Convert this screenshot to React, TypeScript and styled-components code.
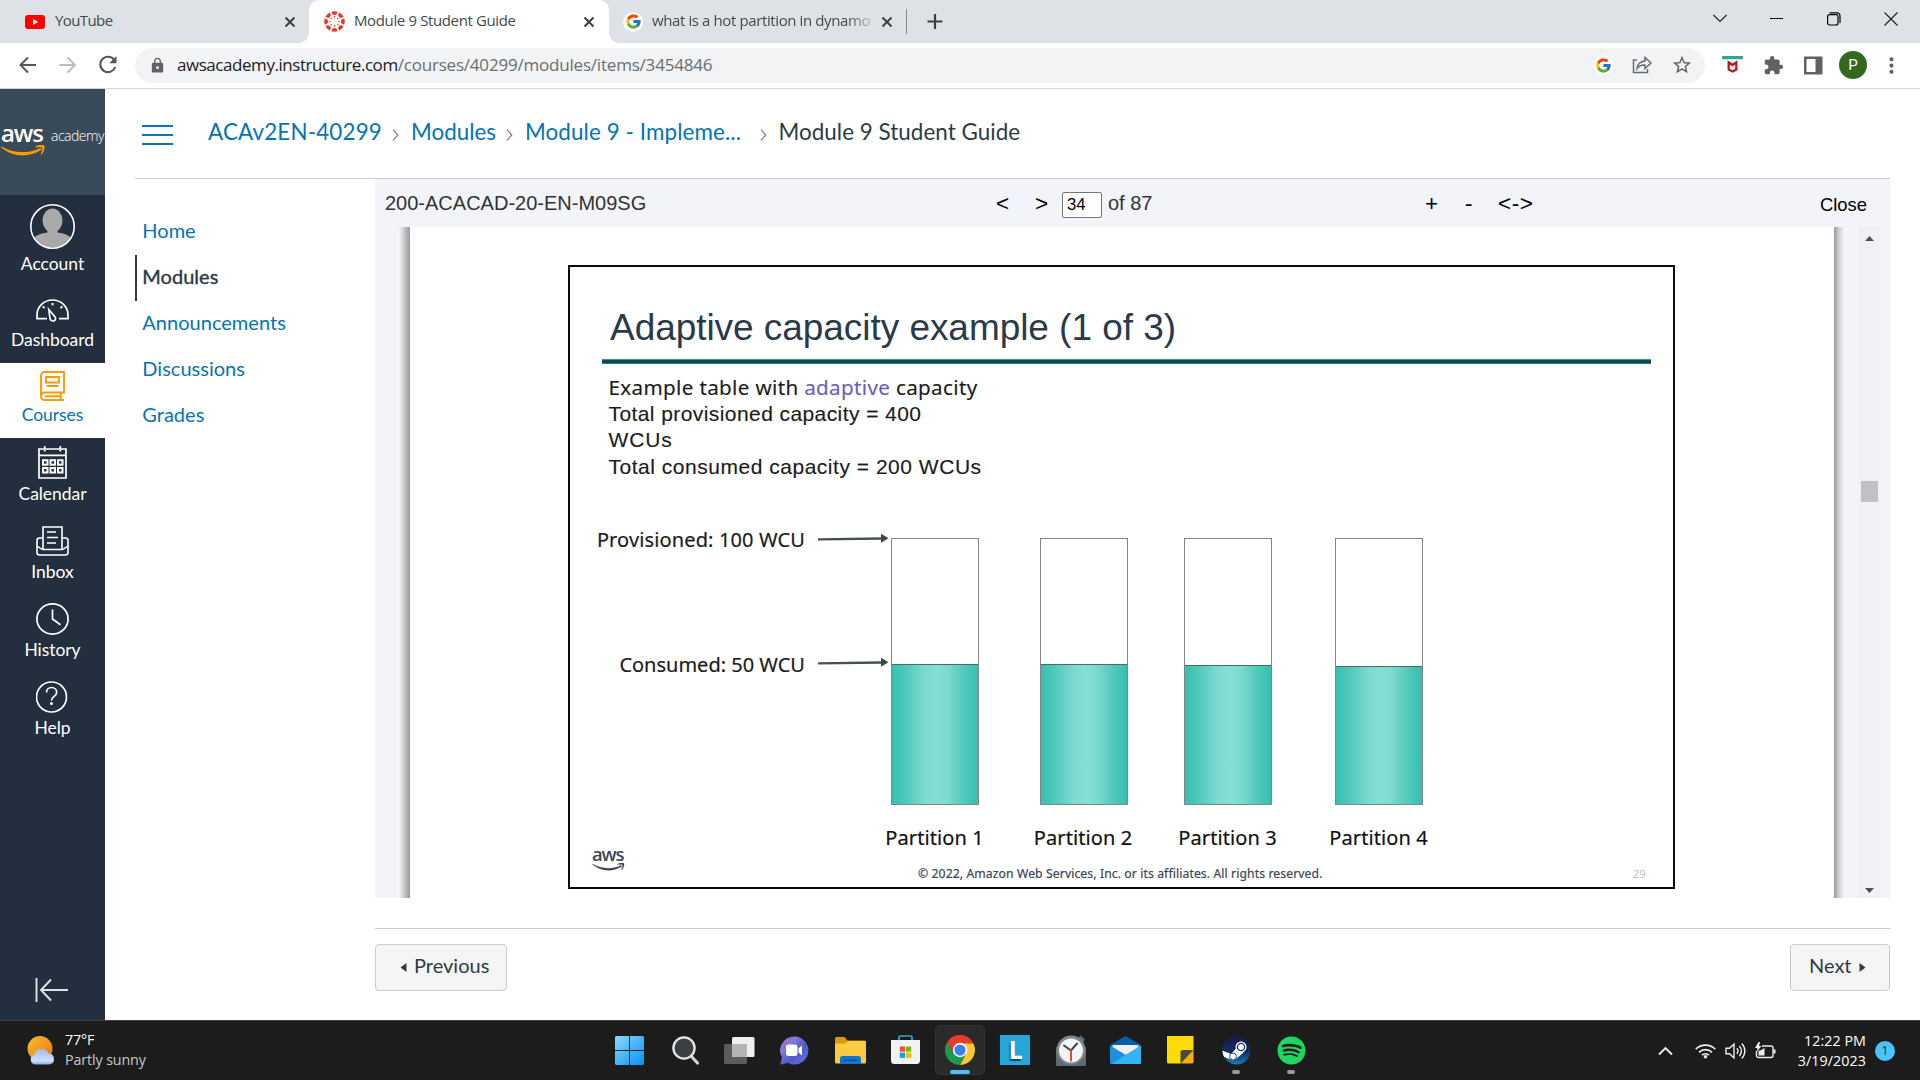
import React from "react";
import styled, { createGlobalStyle, css } from "styled-components";
import { FcGoogle } from "react-icons/fc";
import { MdLock, MdStarBorder, MdExtension, MdMoreVert } from "react-icons/md";
import { FaSpotify } from "react-icons/fa";

const ui = `"Open Sans", "Noto Sans", sans-serif`;
const lato = `Lato, "Noto Sans", sans-serif`;
const arial = `"Liberation Sans", Arial, sans-serif`;
const ember = `"Noto Sans", "Open Sans", sans-serif`;

const Global = createGlobalStyle`
  * { box-sizing: border-box; }
  html, body { margin: 0; padding: 0; background: #fff; overflow: hidden; }
  svg { display: block; flex: none; }
`;

const Screen = styled.div`
  width: 1920px;
  height: 1080px;
  display: flex;
  flex-direction: column;
  overflow: hidden;
  background: #fff;
`;

/* ---------- browser chrome ---------- */

const TabStrip = styled.div`
  height: 43px;
  flex: none;
  display: flex;
  background: #dee1e6;
`;

const Tab = styled.div<{ $w: number; $active?: boolean; $pl: number; $pr?: number }>`
  position: relative;
  width: ${(p) => p.$w}px;
  height: 43px;
  padding-left: ${(p) => p.$pl}px;
  padding-right: ${(p) => p.$pr ?? 13}px;
  display: flex;
  align-items: center;
  ${(p) =>
    p.$active &&
    css`
      background: #fff;
      border-radius: 10px 10px 0 0;
      &::before,
      &::after {
        content: "";
        position: absolute;
        bottom: 0;
        width: 10px;
        height: 10px;
      }
      &::before {
        left: -10px;
        background: radial-gradient(circle at 0 0, transparent 9.5px, #fff 10px);
      }
      &::after {
        right: -10px;
        background: radial-gradient(circle at 100% 0, transparent 9.5px, #fff 10px);
      }
    `}
`;

const TabTitle = styled.span<{ $ls: number; $ml: number; $fade?: boolean }>`
  flex: 1;
  margin-left: ${(p) => p.$ml}px;
  font: 15px/20px ${ui};
  letter-spacing: ${(p) => p.$ls}px;
  color: #45494d;
  white-space: nowrap;
  padding-bottom: 4px;
  ${(p) =>
    p.$fade &&
    css`
      flex: none;
      width: 221px;
      margin-right: 8px;
      mask-image: linear-gradient(90deg, #000 88%, rgba(0, 0, 0, 0.15));
    `}
`;

const TabDivider = styled.span`
  width: 1px;
  height: 25px;
  margin-top: 9px;
  background: #85888c;
`;

const NewTab = styled.span`
  margin: 14px 0 0 20px;
`;

const WindowControls = styled.div`
  margin-left: auto;
  display: flex;
  align-items: center;
  gap: 37px;
  padding: 0 19px 6px 0;
`;

const Toolbar = styled.div`
  height: 46px;
  flex: none;
  display: flex;
  align-items: center;
  border-bottom: 1px solid #d5d7da;
  padding: 0 0 1px 16px;
`;

const NavButtons = styled.div`
  display: flex;
  flex: none;
  width: 119px;
  gap: 16px;
`;

const Omnibox = styled.div`
  width: 1570px;
  flex: none;
  height: 35px;
  border-radius: 18px;
  background: #f1f3f4;
  display: flex;
  align-items: center;
  padding: 0 12px 0 14px;
`;

const Url = styled.div`
  margin-left: 11px;
  flex: 1;
  font: 17px/24px ${ui};
  color: #202124;
  letter-spacing: -0.45px;
  white-space: nowrap;
`;

const UrlPath = styled.span`
  color: #6a6e73;
  letter-spacing: -0.2px;
`;

const OmniIcons = styled.div`
  display: flex;
  align-items: center;
  gap: 18px;
`;

const Extensions = styled.div`
  display: flex;
  flex: none;
  align-items: center;
  margin-left: 17px;
  gap: 20px;
`;

const Avatar = styled.div`
  width: 28px;
  height: 28px;
  margin: 0 -8px 0 -4px;
  border-radius: 50%;
  background: #33691e;
  color: #fff;
  font: 15px/28px Roboto, ${ui};
  text-align: center;
`;

const GoogleDot = styled.span<{ $s: number }>`
  width: ${(p) => p.$s}px;
  height: ${(p) => p.$s}px;
  border-radius: 50%;
  background: #fff;
  display: flex;
  align-items: center;
  justify-content: center;
`;

/* ---------- canvas page ---------- */

const Page = styled.div`
  flex: 1;
  min-height: 0;
  display: flex;
`;

const Sidebar = styled.nav`
  width: 105px;
  flex: none;
  background: #232f3e;
  display: flex;
  flex-direction: column;
`;

const Brand = styled.div`
  height: 106px;
  background: #394b58;
  display: flex;
  padding: 33px 0 0 1px;
  color: #fff;
`;

const BrandMark = styled.div`
  width: 44px;
  display: flex;
  flex-direction: column;
  gap: 1px;
`;

const AwsWord = styled.div<{ $size: number; $ls: number; $lh: number }>`
  font: 600 ${(p) => p.$size}px/${(p) => p.$lh}px ${ui};
  letter-spacing: ${(p) => p.$ls}px;
`;

const AcademyWord = styled.div`
  font: 300 14px/20px ${ui};
  letter-spacing: -0.5px;
  margin: 4px 0 0 6px;
`;

const SideItem = styled.div<{ $h: number; $gap: number; $active?: boolean }>`
  height: ${(p) => p.$h}px;
  flex: none;
  display: flex;
  flex-direction: column;
  align-items: center;
  justify-content: flex-end;
  gap: ${(p) => p.$gap}px;
  padding-bottom: 12px;
  background: ${(p) => (p.$active ? "#fff" : "transparent")};
  color: ${(p) => (p.$active ? "#0374b5" : "#fff")};
  font: 17.5px/22px ${lato};
  letter-spacing: -0.05px;
`;

const Collapse = styled.div`
  margin: auto 0 17px 35px;
`;

const Main = styled.main`
  width: 1755px;
  margin-left: 30px;
  display: flex;
  flex-direction: column;
`;

const Header = styled.header`
  height: 90px;
  flex: none;
  display: flex;
  align-items: center;
  border-bottom: 1px solid #c7cdd1;
  padding: 0 0 3px 7px;
`;

const Hamburger = styled.div`
  width: 31px;
  height: 20px;
  margin: 5px 35px 0 0;
  display: flex;
  flex-direction: column;
  justify-content: space-between;
  span {
    height: 2px;
    background: #0b74b8;
  }
`;

const Crumb = styled.span<{ $current?: boolean; $w: number; $ls?: number }>`
  width: ${(p) => p.$w}px;
  font: 22.4px/28px ${lato};
  letter-spacing: ${(p) => p.$ls ?? 0}px;
  color: ${(p) => (p.$current ? "#2d3b45" : "#0374b5")};
  white-space: nowrap;
`;

const CrumbArrow = styled.span<{ $l: number }>`
  margin: 6px 12px 0 ${(p) => p.$l}px;
`;

const Body = styled.div`
  flex: 1;
  min-height: 0;
  display: flex;
`;

const CourseNav = styled.div`
  width: 240px;
  flex: none;
  padding-top: 30px;
`;

const CourseLink = styled.div<{ $active?: boolean }>`
  height: 46px;
  padding: 0 0 3px 5.3px;
  border-left: 2px solid ${(p) => (p.$active ? "#2d3b45" : "transparent")};
  color: ${(p) => (p.$active ? "#2d3b45" : "#0374b5")};
  -webkit-text-stroke: ${(p) => (p.$active ? "0.4px #2d3b45" : "0")};
  font: 20px/43px ${lato};
  letter-spacing: 0.02px;
`;

const Content = styled.div`
  width: 1515px;
  display: flex;
  flex-direction: column;
`;

const Viewer = styled.section`
  height: 719px;
  flex: none;
  background: #f2f4f9;
  display: flex;
  flex-direction: column;
`;

const ViewerBar = styled.div`
  height: 48px;
  flex: none;
  display: flex;
  align-items: center;
  padding: 0 23px 0 10px;
  font: 20px/24px ${arial};
  color: #333;
`;

const DocName = styled.span`
  width: 611px;
  padding-bottom: 1px;
`;

const BarButton = styled.span<{ $w: number }>`
  width: ${(p) => p.$w}px;
  padding-top: 2px;
  font-size: 22.5px;
  letter-spacing: 0.6px;
  color: #000;
`;

const PageInput = styled.span`
  width: 40px;
  height: 26px;
  margin-top: 3px;
  border: 1px solid #767676;
  border-radius: 2px;
  background: #fff;
  color: #000;
  font: 16.7px/24px ${arial};
  padding-left: 4px;
`;

const PageCount = styled.span`
  width: 323px;
  padding: 0 0 1px 6px;
`;

const CloseButton = styled.span`
  margin-left: auto;
  padding-top: 3px;
  font-size: 18.4px;
  color: #000;
`;

const ViewerBody = styled.div`
  flex: 1;
  display: flex;
  padding-left: 24px;
  overflow: hidden;
`;

const EdgeShadow = styled.div<{ $right?: boolean }>`
  width: ${(p) => (p.$right ? 10 : 11)}px;
  background: ${(p) =>
    p.$right
      ? "linear-gradient(90deg, #98999d, #cfd0d5 50%, #f2f4f9)"
      : "linear-gradient(270deg, #98999b, #c4c5c9 50%, #f2f4f9)"};
`;

const Paper = styled.div`
  width: 1424px;
  background: #fff;
  padding: 38px 0 0 158px;
`;

const Slide = styled.div`
  width: 1107px;
  height: 624px;
  border: solid #0a0a0a;
  border-width: 2px;
  display: flex;
  flex-direction: column;
`;

const SlideTitle = styled.div`
  margin: 39px 0 0 40px;
  font: 37px/44px ${arial};
  letter-spacing: -0.05px;
  color: #2b3a4a;
`;

const SlideRule = styled.div`
  width: 1049px;
  height: 5px;
  margin: 9px 0 0 32px;
  background: #0b4d56;
  border: solid #5b868c;
  border-width: 1px 0;
  border-bottom-color: #34707a;
`;

const SlideText = styled.div`
  height: 106px;
  margin: 10px 0 0 38.5px;
  color: #1c1c1c;
`;

const Line = styled.div<{ $ember?: boolean; $ls: number }>`
  height: 26.5px;
  white-space: nowrap;
  font: ${(p) => (p.$ember ? `20.6px/26px ${ember}` : `21px/26.5px ${arial}`)};
  letter-spacing: ${(p) => p.$ls}px;
  -webkit-text-stroke: 0.15px currentColor;
`;

const Accent = styled.span`
  color: #6a5fc0;
`;

const Chart = styled.div`
  margin-top: 46px;
  display: flex;
  height: 326px;
  flex: none;
`;

const Markers = styled.div`
  width: 321px;
  display: flex;
  flex-direction: column;
  gap: 96.5px;
`;

const Marker = styled.div<{ $ls: number }>`
  height: 28px;
  display: flex;
  justify-content: flex-end;
  align-items: center;
  gap: 13px;
  padding-right: 2px;
  font: 20px/28px ${ember};
  letter-spacing: ${(p) => p.$ls}px;
  color: #1c1c1c;
  -webkit-text-stroke: 0.2px currentColor;
  svg {
    margin-bottom: 4px;
  }
`;

const Partition = styled.div<{ $ml: number }>`
  width: 88px;
  margin: 12px 0 0 ${(p) => p.$ml}px;
  display: flex;
  flex-direction: column;
  align-items: center;
`;

const Bar = styled.div`
  width: 88px;
  height: 267px;
  flex: none;
  border: 1px solid #7e8686;
  display: flex;
  flex-direction: column;
  justify-content: flex-end;
`;

const Fill = styled.div<{ $h: number }>`
  height: ${(p) => p.$h}px;
  border-top: 1px solid #4d6a68;
  background: linear-gradient(90deg, #35c0b1 0%, #4cc8ba 14%, #7cdacd 38%, #86dfd4 52%, #7cdacd 65%, #4cc8ba 86%, #35c0b1 100%);
`;

const PartitionLabel = styled.div`
  margin: 19px 0 0 -1px;
  font: 20px/28px ${ember};
  letter-spacing: 0.08px;
  color: #111;
  white-space: nowrap;
  -webkit-text-stroke: 0.2px currentColor;
`;

const SlideFooter = styled.div`
  margin-top: -4px;
  height: 36px;
  display: flex;
  color: #3b4656;
`;

const SlideLogo = styled.div`
  width: 348px;
  padding-left: 22px;
  display: flex;
  flex-direction: column;
  margin-top: -3px;
`;

const Copyright = styled.div`
  width: 715px;
  padding-top: 17px;
  font: 12.2px/18px ${ember};
  letter-spacing: 0.1px;
  white-space: nowrap;
  -webkit-text-stroke: 0.2px currentColor;
`;

const SlideNumber = styled.div`
  padding-top: 17px;
  font: 11px/18px ${ember};
  color: #b9bcc0;
`;

const Scrollbar = styled.div`
  width: 21px;
  margin-left: 15px;
  background: #f1f1f1;
  display: flex;
  flex-direction: column;
  align-items: center;
  padding: 9px 0 5px;
`;

const Thumb = styled.div`
  width: 17px;
  height: 21px;
  margin: 240px 0 auto;
  background: #c1c1c1;
`;

const Pager = styled.div`
  margin-top: 30px;
  padding-top: 15px;
  border-top: 1px solid #c7cdd1;
  display: flex;
  justify-content: space-between;
`;

const PagerButton = styled.div<{ $w: number; $pl: number }>`
  width: ${(p) => p.$w}px;
  height: 47px;
  padding: 0 0 5px ${(p) => p.$pl}px;
  border: 1px solid #c7cdd1;
  border-radius: 4px;
  background: #f5f5f5;
  display: flex;
  align-items: center;
  gap: 7px;
  font: 20px/24px ${lato};
  color: #2d3b45;
  svg {
    margin-top: 4px;
  }
`;

/* ---------- taskbar ---------- */

const Taskbar = styled.footer`
  height: 60px;
  flex: none;
  display: flex;
  align-items: stretch;
  background: #1c1c1c;
  border-top: 1px solid #3e4042;
  color: #fff;
`;

const Weather = styled.div`
  width: 604.5px;
  flex: none;
  padding: 0 0 1px 27px;
  display: flex;
  align-items: center;
  gap: 8px;
`;

const TwoLines = styled.div<{ $right?: boolean }>`
  font: 14.3px/20px ${ui};
  letter-spacing: ${(p) => (p.$right ? 0.05 : -0.12)}px;
  text-align: ${(p) => (p.$right ? "right" : "left")};
`;

const Muted = styled.div`
  color: #c8c8c8;
`;

const AppRow = styled.div`
  display: flex;
  align-items: center;
  gap: 5.15px;
`;

const AppTile = styled.div<{ $active?: boolean }>`
  position: relative;
  width: 50px;
  height: 50px;
  margin-bottom: 1px;
  display: flex;
  align-items: center;
  justify-content: center;
  border-radius: 6px;
  ${(p) => p.$active && "background: #2a2a2a; box-shadow: inset 0 0 0 1px #343434;"}
`;

const RunPill = styled.span<{ $active?: boolean }>`
  position: absolute;
  bottom: 1px;
  left: 50%;
  width: ${(p) => (p.$active ? 20 : 8)}px;
  height: 4px;
  border-radius: 2px;
  transform: translateX(-50%);
  background: ${(p) => (p.$active ? "#4cc2ff" : "#9a9a9a")};
`;

const Tray = styled.div`
  margin-left: auto;
  padding-right: 25px;
  display: flex;
  align-items: center;
`;

const TrayIcon = styled.span<{ $mr: number }>`
  margin-right: ${(p) => p.$mr}px;
`;

const Badge = styled.span`
  width: 20px;
  height: 20px;
  margin-left: 9px;
  border-radius: 50%;
  background: #4cc2ff;
  color: #10303f;
  font: 12px/20px ${ui};
  text-align: center;
`;

/* ---------- icons ---------- */

const line = (w = 1.5, c = "currentColor") => ({ fill: "none", stroke: c, strokeWidth: w });

const CloseX = () => (
  <svg width="12" height="12" viewBox="0 0 12 12" {...line(2, "#3c4043")}>
    <path d="M1.5 1.5l9 9M10.5 1.5l-9 9" />
  </svg>
);

const YouTubeIcon = () => (
  <svg width="20" height="14" viewBox="0 0 20 14">
    <rect width="20" height="14" rx="3" fill="#f00" />
    <path d="M8 4l5.2 3L8 10z" fill="#fff" />
  </svg>
);

const CanvasIcon = () => (
  <svg width="21" height="21" viewBox="0 0 21 21">
    {[0, 45, 90, 135, 180, 225, 270, 315].map((a) => (
      <g key={a} transform={`rotate(${a} 10.5 10.5)`} fill="#e4392b">
        <path d="M7.500 .7a10.200 10.200 0 0 1 6 0C13.300 2.900 12.200 4 10.500 4S7.700 2.900 7.500 .7z" />
        <circle cx="10.500" cy="5.900" r=".8" />
      </g>
    ))}
  </svg>
);

const Smile = ({ w, h, c }: { w: number; h: number; c: string }) => (
  <svg width={w} height={h} viewBox="0 0 44 11">
    <path d="M0 1.2C12 8.5 27 8.7 38.5 3.4c1.6-.6 2.6.9 1.2 1.9C27.500 13 11 12 0 2.200z" fill={c} />
    <path d="M34.500 1.200c2.500-1.500 7.500-1.600 8.700-.7 1.300 1.200-.3 6.800-2.700 9-.5.4-1 .1-.8-.4.7-1.800 2-5.400 1.400-6.300-.7-.9-4.200-.7-6-.5-.8.1-1.100-.6-.6-1.100z" fill={c} />
  </svg>
);

const AccountIcon = () => (
  <svg width="45" height="45" viewBox="0 0 45 45">
    <defs>
      <clipPath id="face"><circle cx="22.500" cy="22.500" r="21" /></clipPath>
    </defs>
    <g clipPath="url(#face)" fill="#a9a9a9">
      <ellipse cx="22.500" cy="16.500" rx="10" ry="12" />
      <path d="M17.500 25h10v3.500c8 1 13 3.500 15.500 8V45H2v-8.500c2.500-4.500 7.500-7 15.500-8z" />
    </g>
    <circle cx="22.500" cy="22.500" r="21.700" {...line(1.600, "#fff")} />
  </svg>
);

const DashboardIcon = () => (
  <svg width="33" height="23" viewBox="0 0 33 23" {...line(1.700)}>
    <path d="M11 19.700H1V16C1 7.500 8 1 16.500 1S32 7.500 32 16v3.700H23" />
    <path d="M12.800 10.500l6.300 7.500c1.300 2-.3 4-2 4s-3-1.200-3.200-3z" />
    <path d="M6.800 7.500l1.700 1.500M16.500 4v2.200M26.200 7.500l-1.700 1.500" strokeWidth="2" />
  </svg>
);

const CoursesIcon = () => (
  <svg width="25" height="30" viewBox="0 0 25 30" {...line(1.900, "#ff9900")}>
    <path d="M1 26V4.500C1 2.500 2.500 1 4.500 1H24v20.500H5C2.500 21.500 1 23.200 1 25.500S2.500 29 5 29h19" />
    <path d="M6 6h13v5.500H6zM6.500 15h12M4.500 25.300h16M20.800 22v7" />
  </svg>
);

const CalendarIcon = () => (
  <svg width="29" height="33" viewBox="0 0 29 33" {...line(1.700)}>
    <path d="M1 3h27v29H1zM1 9.300h27M6.700 0v5.500M22.300 0v5.500" />
    {[5, 12.500, 20].map((x) =>
      [14.200, 22].map((y) => <rect key={`${x}-${y}`} x={x} y={y} width="4.500" height="4.500" strokeWidth="2" />)
    )}
  </svg>
);

const InboxIcon = () => (
  <svg width="33" height="30" viewBox="0 0 33 30" {...line(1.600)}>
    <path d="M7 23.500V1h19v22.500" />
    <path d="M7 12H3.500C2 12 1 13 1 14.500V26.500C1 28 2 29 3.500 29h26c1.500 0 2.500-1 2.500-2.500V14.500C32 13 31 12 29.500 12H26" />
    <path d="M1 20.500c2.500 0 3.500 3 6 3h19c2.500 0 3.500-3 6-3" />
    <path d="M11 6h9M11 11.500h11M11 17h9" />
  </svg>
);

const HistoryIcon = () => (
  <svg width="33" height="32" viewBox="0 0 33 32" {...line(1.700)}>
    <ellipse cx="16.500" cy="16" rx="15.600" ry="15.100" />
    <path d="M16.500 6.500V16l8 5.800" />
  </svg>
);

const HelpIcon = () => (
  <svg width="33" height="32" viewBox="0 0 33 32" {...line(1.700)}>
    <circle cx="15.500" cy="16" r="15" />
    <path d="M10.500 11.500c0-3 2.200-5 5-5s5.200 1.900 5.200 4.700c0 4-5.200 4.300-5.200 8.300" />
    <circle cx="15.500" cy="22.600" r="1.500" fill="currentColor" stroke="none" />
  </svg>
);

const CrumbChevron = () => (
  <svg width="7" height="12" viewBox="0 0 7 12" {...line(1.200, "#73818c")}>
    <path d="M1 .7L5.800 6 1 11.300" />
  </svg>
);

const Arrow = () => (
  <svg width="71" height="11" viewBox="0 0 71 11">
    <path d="M0 6.300L64 5.500" stroke="#465250" strokeWidth="2.300" />
    <path d="M63 .8L70.500 5.200 63 9.800z" fill="#3c4846" />
  </svg>
);

const SunCloud = () => (
  <svg width="30" height="30" viewBox="0 0 30 30">
    <defs>
      <linearGradient id="sun" x1="0" y1="0" x2="1" y2="1"><stop offset="0" stopColor="#f5bf2c" /><stop offset="1" stopColor="#ef7014" /></linearGradient>
      <linearGradient id="cloud" x1="0" y1="0" x2="0" y2="1"><stop offset="0" stopColor="#9dbdf2" /><stop offset=".75" stopColor="#cfe0f8" /><stop offset="1" stopColor="#88aef0" /></linearGradient>
    </defs>
    <circle cx="13" cy="13.500" r="12.500" fill="url(#sun)" />
    <path d="M8 29.500a5 5 0 0 1-.8-9.700 7.500 7.500 0 0 1 14.300-1.200 5.500 5.500 0 0 1 1 10.900z" fill="url(#cloud)" />
  </svg>
);

const WindowsIcon = () => (
  <svg width="29" height="29" viewBox="0 0 29 29">
    <defs><linearGradient id="win" x1="0" y1="0" x2="1" y2="1"><stop offset="0" stopColor="#86dcff" /><stop offset="1" stopColor="#0a90f0" /></linearGradient></defs>
    <path d="M1.500 0H14v14H0V1.500A1.500 1.500 0 0 1 1.500 0zM15 0h12.500A1.500 1.500 0 0 1 29 1.500V14H15zM0 15h14v14H1.500A1.500 1.500 0 0 1 0 27.500zM15 15h14v12.500a1.500 1.500 0 0 1-1.500 1.500H15z" fill="url(#win)" />
  </svg>
);

const SearchIcon = () => (
  <svg width="29" height="29" viewBox="0 0 29 29">
    <path d="M21 20l6.500 7" stroke="#cdd2d6" strokeWidth="3.200" strokeLinecap="round" />
    <circle cx="14" cy="12" r="10.600" fill="#3c4043" stroke="#e4e7e9" strokeWidth="2.300" />
  </svg>
);

const TaskViewIcon = () => (
  <svg width="31" height="29" viewBox="0 0 31 29">
    <rect x="8" y="1" width="22.500" height="20" rx="1.500" fill="#efefef" />
    <rect x="0" y="8" width="23" height="20" rx="1.500" fill="#5c5c5c" />
    <path d="M8 8h15v13H8z" fill="#b4b4b4" />
  </svg>
);

const ChatIcon = () => (
  <svg width="29" height="29" viewBox="0 0 29 29">
    <defs><linearGradient id="chat" x1="0" y1="0" x2="1" y2="1"><stop offset="0" stopColor="#a36bb5" /><stop offset=".3" stopColor="#7c7ed2" /><stop offset=".6" stopColor="#5059c9" /><stop offset="1" stopColor="#5a7fe0" /></linearGradient></defs>
    <path d="M14.500.5a14 14 0 1 1-6.600 26.400L1.500 28.500a.8.800 0 0 1-1-1L2 21.500A14 14 0 0 1 14.500.5z" fill="url(#chat)" />
    <rect x="6" y="8.500" width="11.500" height="11.500" rx="2.500" fill="#fff" />
    <path d="M18.500 12.500l3.500-3v10l-3.500-3z" fill="#fff" />
  </svg>
);

const ExplorerIcon = () => (
  <svg width="31" height="28" viewBox="0 0 31 28">
    <path d="M1.500 1h8l3 3.500H29.500A1.500 1.500 0 0 1 31 6v4H0V2.500A1.500 1.500 0 0 1 1.500 1z" fill="#d99a08" />
    <path d="M0 7.500l10 0 3-2.500h16.500A1.500 1.500 0 0 1 31 6.500V26a1.500 1.500 0 0 1-1.500 1.500h-28A1.500 1.500 0 0 1 0 26z" fill="#fcca42" />
    <path d="M5 28v-5.500A2.500 2.500 0 0 1 7.500 20h16a2.500 2.500 0 0 1 2.500 2.500V28z" fill="#1276cc" />
    <path d="M9 24.300h13" stroke="#0b4f96" strokeWidth="1.500" strokeLinecap="round" />
  </svg>
);

const StoreIcon = () => (
  <svg width="29" height="30" viewBox="0 0 29 30">
    <path d="M8 7V2.500C8 1.500 8.700 1 9.500 1h10c.8 0 1.500.5 1.500 1.500V7" {...line(1.700, "#29a9ea")} />
    <path d="M0 5h29v20.500a3.500 3.500 0 0 1-3.500 3.500h-22A3.500 3.500 0 0 1 0 25.500z" fill="#f2f2f2" />
    <path d="M8.800 11.500h5.200v5.200H8.800z" fill="#f25022" />
    <path d="M15 11.500h5.200v5.200H15z" fill="#7fba00" />
    <path d="M8.800 17.700h5.200v5.200H8.800z" fill="#00a4ef" />
    <path d="M15 17.700h5.200v5.200H15z" fill="#ffb900" />
  </svg>
);

const ChromeIcon = () => (
  <svg width="30" height="30" viewBox="0 0 48 48">
    <path d="M24 13h21.300A24 24 0 0 1 24 48l9.500-18.500z" fill="#fcc934" />
    <path d="M33.500 29.500L24 48A24 24 0 0 1 3.200 12l11.300 17.500z" fill="#1e9a4c" />
    <path d="M14.500 29.500L3.200 12A24 24 0 0 1 45.300 13H24z" fill="#e33b2e" />
    <circle cx="24" cy="24" r="11.500" fill="#fff" />
    <circle cx="24" cy="24" r="9" fill="#3b7eec" />
  </svg>
);

const LTile = styled.div`
  width: 30px;
  height: 30px;
  background: #25a5d8;
  color: #fff;
  font: 700 25px/29px ${ui};
  text-align: center;
  text-shadow: -1px 2px 1px #0b4a78;
`;

const ClockIcon = () => (
  <svg width="30" height="31" viewBox="0 0 30 31">
    <path d="M22 2.500l3-2 4 4-2 3zM0 12h30v17.500A1.500 1.500 0 0 1 28.500 31h-27A1.500 1.500 0 0 1 0 29.500z" fill="#5f6a74" />
    <circle cx="15" cy="15" r="14.500" fill="#7d8790" />
    <circle cx="15" cy="15.500" r="12" fill="#f3f4f5" />
    <path d="M8 10.500l7 5 6-7" {...line(2, "#3b4249")} strokeLinecap="round" />
    <path d="M15 15.500v10" stroke="#dd4b2a" strokeWidth="2" strokeLinecap="round" />
  </svg>
);

const MailIcon = () => (
  <svg width="31" height="28" viewBox="0 0 31 28">
    <path d="M0 9L15.500 0 31 9v5H0z" fill="#0a5ca8" />
    <path d="M2.500 9h26v10h-26z" fill="#eef2f5" />
    <path d="M0 9.500l31 18.500H1.500A1.500 1.500 0 0 1 0 26.500z" fill="#1c8fe0" />
    <path d="M31 9.500V26.500A1.500 1.500 0 0 1 29.500 28H2L15.500 18.700z" fill="#32b4f0" />
  </svg>
);

const NotesIcon = () => (
  <svg width="27" height="28" viewBox="0 0 27 28">
    <path d="M0 0h26.500v15L13.500 27.500H1.500A1.500 1.500 0 0 1 0 26z" fill="#fddc05" />
    <path d="M26.500 14v12a1.500 1.500 0 0 1-1.500 1.500H13.500z" fill="#f6ae08" />
    <path d="M13.500 27.500V16A2 2 0 0 1 15.500 14h11z" fill="#4a4a45" />
  </svg>
);

const SteamIcon = () => (
  <svg width="29" height="29" viewBox="0 0 29 29">
    <defs>
      <linearGradient id="steam" x1="0" y1="0" x2="0" y2="1"><stop offset="0" stopColor="#15194a" /><stop offset=".55" stopColor="#122e62" /><stop offset="1" stopColor="#1280b5" /></linearGradient>
      <clipPath id="disc"><circle cx="14.500" cy="14.500" r="14" /></clipPath>
    </defs>
    <circle cx="14.500" cy="14.500" r="14" fill="url(#steam)" />
    <g clipPath="url(#disc)">
      <path d="M0 14.500l9 3.500 5.500-6 7 4.500-6.500 5.500-4 2.500L0 20z" fill="#fff" />
      <circle cx="11" cy="20.500" r="3.500" fill="#fff" stroke="#16477c" strokeWidth="1" />
      <circle cx="19" cy="11" r="5.500" fill="#fff" />
      <circle cx="19" cy="11" r="3.600" fill="#fff" stroke="#14305f" strokeWidth="1.300" />
    </g>
  </svg>
);

/* ---------- data ---------- */

const sideItems = [
  { label: "Account", h: 92, gap: 4, icon: <AccountIcon /> },
  { label: "Dashboard", h: 76, gap: 7, icon: <DashboardIcon /> },
  { label: "Courses", h: 75, gap: 3, icon: <CoursesIcon />, active: true },
  { label: "Calendar", h: 79, gap: 4, icon: <CalendarIcon /> },
  { label: "Inbox", h: 78, gap: 5, icon: <InboxIcon /> },
  { label: "History", h: 78, gap: 4, icon: <HistoryIcon /> },
  { label: "Help", h: 78, gap: 4, icon: <HelpIcon /> },
];

const courseLinks = ["Home", "Modules", "Announcements", "Discussions", "Grades"];

const partitions = [
  { label: "Partition 1", ml: 0, fill: 140 },
  { label: "Partition 2", ml: 60.5, fill: 140 },
  { label: "Partition 3", ml: 56.5, fill: 139 },
  { label: "Partition 4", ml: 63, fill: 138 },
];

const apps: { icon: React.ReactNode; active?: boolean; running?: boolean }[] = [
  { icon: <WindowsIcon /> },
  { icon: <SearchIcon /> },
  { icon: <TaskViewIcon /> },
  { icon: <ChatIcon /> },
  { icon: <ExplorerIcon /> },
  { icon: <StoreIcon /> },
  { icon: <ChromeIcon />, active: true, running: true },
  { icon: <LTile>L</LTile> },
  { icon: <ClockIcon /> },
  { icon: <MailIcon /> },
  { icon: <NotesIcon /> },
  { icon: <SteamIcon />, running: true },
  { icon: <FaSpotify size={29} color="#1ed760" />, running: true },
];

export default function App() {
  return (
    <Screen>
      <Global />
      <TabStrip>
        <Tab $w={309} $pl={25}>
          <YouTubeIcon />
          <TabTitle $ls={-0.6} $ml={10}>YouTube</TabTitle>
          <CloseX />
        </Tab>
        <Tab $w={300} $pl={15} $pr={14} $active>
          <CanvasIcon />
          <TabTitle $ls={-0.37} $ml={9}>Module 9 Student Guide</TabTitle>
          <CloseX />
        </Tab>
        <Tab $w={297} $pl={14} $pr={10}>
          <GoogleDot $s={20}><FcGoogle size={17} /></GoogleDot>
          <TabTitle $ls={-0.39} $ml={9} $fade>what is a hot partition in dynamo</TabTitle>
          <CloseX />
        </Tab>
        <TabDivider />
        <NewTab>
          <svg width="16" height="15" viewBox="0 0 16 15" {...line(2.200, "#3c4043")}>
            <path d="M8 0v15M.5 7.500h15" />
          </svg>
        </NewTab>
        <WindowControls>
          <svg width="20" height="13" viewBox="0 0 20 13" {...line(1.200, "#222")}>
            <path d="M3.500 3l6.500 6.500L16.500 3" />
          </svg>
          <svg width="20" height="13" viewBox="0 0 20 13" {...line(1, "#000")}>
            <path d="M3 6.500h13" />
          </svg>
          <svg width="20" height="14" viewBox="0 0 20 14" {...line(1.200, "#000")}>
            <rect x="3.600" y="2.600" width="10.400" height="10.400" rx="2" />
            <path d="M5.500 .8H13a3 3 0 0 1 3 3V11" />
          </svg>
          <svg width="20" height="14" viewBox="0 0 20 14" {...line(1.200, "#222")}>
            <path d="M3.500 .5l13 13M16.500 .5l-13 13" />
          </svg>
        </WindowControls>
      </TabStrip>

      <Toolbar>
        <NavButtons>
          <svg width="24" height="20" viewBox="0 0 24 20" {...line(2, "#54585d")}>
            <path d="M20 10H4.500M12 2.500L4.500 10l7.500 7.500" />
          </svg>
          <svg width="24" height="20" viewBox="0 0 24 20" {...line(2, "#babcbe")}>
            <path d="M3.500 10H19M11.500 2.500L19 10l-7.500 7.500" />
          </svg>
          <svg width="24" height="20" viewBox="0 0 24 20" {...line(2.100, "#54585d")}>
            <path d="M18 4.500A7.700 7.700 0 1 0 19.300 12" />
            <path d="M20.500 1v7.300h-7.300z" fill="#54585d" stroke="none" />
          </svg>
        </NavButtons>
        <Omnibox>
          <MdLock size={17} color="#5f6368" />
          <Url>
            awsacademy.instructure.com<UrlPath>/courses/40299/modules/items/3454846</UrlPath>
          </Url>
          <OmniIcons>
            <GoogleDot $s={20}><FcGoogle size={17} /></GoogleDot>
            <svg width="22" height="20" viewBox="0 0 22 20" {...line(1.500, "#686c70")}>
              <path d="M6 5H2.500v12.500h14V14" />
              <path d="M6 13.500c.5-4.500 3.500-7 8-7.500V2.500L20 8l-6 5.500V10c-3.500-.2-6 .8-8 3.500z" />
            </svg>
            <MdStarBorder size={22} color="#5f6368" />
          </OmniIcons>
        </Omnibox>
        <Extensions>
          <svg width="21" height="18" viewBox="0 0 21 18">
            <rect width="21" height="3.200" rx="1" fill="#36a58c" />
            <path d="M6.700 6.500V13.500L10.500 15.500l3.800-2V6.500L10.500 9z" {...line(2.300, "#c01818")} />
          </svg>
          <MdExtension size={21} color="#5f6368" />
          <svg width="19" height="19" viewBox="0 0 19 19">
            <path d="M0 .5h18.500v18H0zM2.500 3v13H11.500V3z" fill="#5f6368" fillRule="evenodd" />
          </svg>
          <Avatar>P</Avatar>
          <MdMoreVert size={25} color="#5f6368" />
        </Extensions>
      </Toolbar>

      <Page>
        <Sidebar>
          <Brand>
            <BrandMark>
              <AwsWord $size={24} $ls={-1.1} $lh={22}>aws</AwsWord>
              <Smile w={44} h={11} c="#ff9900" />
            </BrandMark>
            <AcademyWord>academy</AcademyWord>
          </Brand>
          {sideItems.map((s) => (
            <SideItem key={s.label} $h={s.h} $gap={s.gap} $active={s.active}>
              {s.icon}
              <span>{s.label}</span>
            </SideItem>
          ))}
          <Collapse>
            <svg width="34" height="26" viewBox="0 0 34 26" {...line(1.900, "#dfe2e5")}>
              <path d="M1.500 1v24M33 13H7M16 2.500L6 13l10 10.500" />
            </svg>
          </Collapse>
        </Sidebar>

        <Main>
          <Header>
            <Hamburger><span /><span /><span /></Hamburger>
            <Crumb $w={172.500} $ls={0.170}>ACAv2EN-40299</Crumb>
            <CrumbArrow $l={11.500}><CrumbChevron /></CrumbArrow>
            <Crumb $w={85}>Modules</Crumb>
            <CrumbArrow $l={10}><CrumbChevron /></CrumbArrow>
            <Crumb $w={217} $ls={0.1}>Module 9 - Impleme...</Crumb>
            <CrumbArrow $l={17.500}><CrumbChevron /></CrumbArrow>
            <Crumb $w={260} $ls={0.04} $current>Module 9 Student Guide</Crumb>
          </Header>
          <Body>
            <CourseNav>
              {courseLinks.map((l) => (
                <CourseLink key={l} $active={l === "Modules"}>{l}</CourseLink>
              ))}
            </CourseNav>
            <Content>
              <Viewer>
                <ViewerBar>
                  <DocName>200-ACACAD-20-EN-M09SG</DocName>
                  <BarButton $w={39}>&lt;</BarButton>
                  <BarButton $w={27}>&gt;</BarButton>
                  <PageInput>34</PageInput>
                  <PageCount>of 87</PageCount>
                  <BarButton $w={40}>+</BarButton>
                  <BarButton $w={33}>-</BarButton>
                  <BarButton $w={40}>&lt;-&gt;</BarButton>
                  <CloseButton>Close</CloseButton>
                </ViewerBar>
                <ViewerBody>
                  <EdgeShadow />
                  <Paper>
                    <Slide>
                      <SlideTitle>Adaptive capacity example (1 of 3)</SlideTitle>
                      <SlideRule />
                      <SlideText>
                        <Line $ember $ls={0.35}>
                          Example table with <Accent>adaptive</Accent> capacity
                        </Line>
                        <Line $ls={0.42}>Total provisioned capacity = 400</Line>
                        <Line $ls={0.9}>WCUs</Line>
                        <Line $ls={0.52}>Total consumed capacity = 200 WCUs</Line>
                      </SlideText>
                      <Chart>
                        <Markers>
                          <Marker $ls={0.13}>Provisioned: 100 WCU<Arrow /></Marker>
                          <Marker $ls={0}>Consumed: 50 WCU<Arrow /></Marker>
                        </Markers>
                        {partitions.map((p) => (
                          <Partition key={p.label} $ml={p.ml}>
                            <Bar><Fill $h={p.fill} /></Bar>
                            <PartitionLabel>{p.label}</PartitionLabel>
                          </Partition>
                        ))}
                      </Chart>
                      <SlideFooter>
                        <SlideLogo>
                          <AwsWord $size={18.5} $ls={-1.2} $lh={18}>aws</AwsWord>
                          <Smile w={33} h={8} c="#3b4656" />
                        </SlideLogo>
                        <Copyright>© 2022, Amazon Web Services, Inc. or its affiliates. All rights reserved.</Copyright>
                        <SlideNumber>29</SlideNumber>
                      </SlideFooter>
                    </Slide>
                  </Paper>
                  <EdgeShadow $right />
                  <Scrollbar>
                    <svg width="9" height="5" viewBox="0 0 9 5"><path d="M4.500 0L9 5H0z" fill="#505050" /></svg>
                    <Thumb />
                    <svg width="9" height="5" viewBox="0 0 9 5"><path d="M0 0h9L4.500 5z" fill="#505050" /></svg>
                  </Scrollbar>
                </ViewerBody>
              </Viewer>
              <Pager>
                <PagerButton $w={132} $pl={24}>
                  <svg width="7" height="9" viewBox="0 0 7 9"><path d="M6.500 0v9L.5 4.500z" fill="#2d3b45" /></svg>
                  Previous
                </PagerButton>
                <PagerButton $w={100} $pl={18}>
                  Next
                  <svg width="7" height="9" viewBox="0 0 7 9"><path d="M.5 0v9l6-4.500z" fill="#2d3b45" /></svg>
                </PagerButton>
              </Pager>
            </Content>
          </Body>
        </Main>
      </Page>

      <Taskbar>
        <Weather>
          <SunCloud />
          <TwoLines>
            <div>77°F</div>
            <Muted>Partly sunny</Muted>
          </TwoLines>
        </Weather>
        <AppRow>
          {apps.map((a, i) => (
            <AppTile key={i} $active={a.active}>
              {a.icon}
              {a.running && <RunPill $active={a.active} />}
            </AppTile>
          ))}
        </AppRow>
        <Tray>
          <TrayIcon $mr={22}>
            <svg width="15" height="10" viewBox="0 0 15 10" {...line(1.900, "#eee")}><path d="M1 8.500L7.500 2 14 8.500" /></svg>
          </TrayIcon>
          <TrayIcon $mr={9}>
            <svg width="21" height="16" viewBox="0 0 21 16" {...line(1.700, "#eee")}>
              <path d="M.8 6.200a13.700 13.700 0 0 1 19.400 0M4 9.300a9.200 9.200 0 0 1 13 0M7 12.200a5 5 0 0 1 7 0" />
              <circle cx="10.500" cy="13.800" r="1.800" fill="#eee" stroke="none" />
            </svg>
          </TrayIcon>
          <TrayIcon $mr={9}>
            <svg width="21" height="18" viewBox="0 0 21 18" {...line(1.400, "#eee")}>
              <path d="M1 6.200h3.500L9 2v14l-4.500-4.200H1zM11.800 6.300a4 4 0 0 1 0 5.400M14.300 4a7 7 0 0 1 0 10M16.700 1.500a10.500 10.500 0 0 1 0 15" />
            </svg>
          </TrayIcon>
          <TrayIcon $mr={22}>
            <svg width="21" height="17" viewBox="0 0 21 17">
              <path d="M7 4h9a2 2 0 0 1 2 2v7.500a2 2 0 0 1-2 2H3.500a2 2 0 0 1-2-2V9" {...line(1.400, "#eee")} />
              <path d="M18.500 7.500h2v4h-2zM3.500 8.500h2L9.500 6v7.500h-6zM3.500 0L0 6h2.500L1.500 10 6.500 4H4L5 0z" fill="#eee" />
            </svg>
          </TrayIcon>
          <TwoLines $right>
            <div>12:22 PM</div>
            <div>3/19/2023</div>
          </TwoLines>
          <Badge>1</Badge>
        </Tray>
      </Taskbar>
    </Screen>
  );
}
